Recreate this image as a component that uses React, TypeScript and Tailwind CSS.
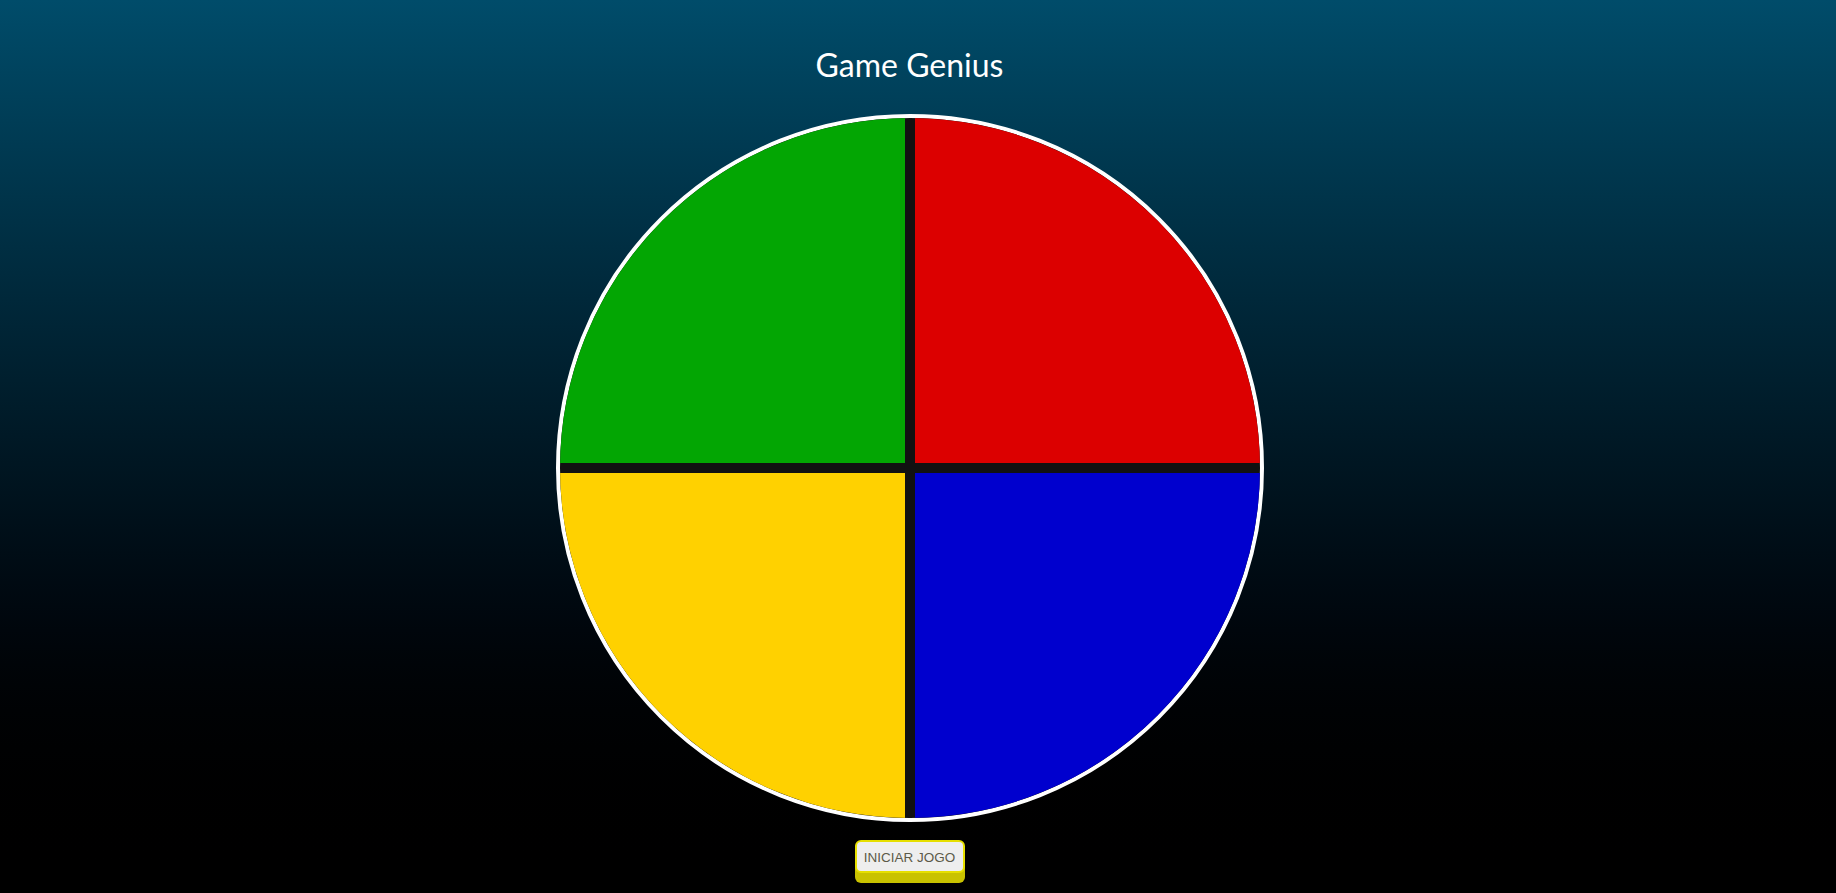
export default function App() {
  const pads = [
    { id: 'green', color: 'bg-[#03a603]' },
    { id: 'red', color: 'bg-[#dc0000]' },
    { id: 'yellow', color: 'bg-[#ffd100]' },
    { id: 'blue', color: 'bg-[#0000ce]' },
  ];

  return (
    <div className="h-[893px] w-full overflow-hidden bg-gradient-to-b from-[#004c6a] to-[#000000] flex flex-col items-center pt-[43px] pr-[17px]">
      {/* Title */}
      <h1 className="text-white text-[32px] leading-[44px] font-['Lato',sans-serif]">Game Genius</h1>

      {/* Board */}
      <div className="mt-[27px] w-[708px] h-[708px] rounded-full border-4 border-white bg-[#111111] overflow-hidden grid grid-cols-2 grid-rows-2 gap-[10px]">
        {pads.map((pad) => (
          <div key={pad.id} className={`${pad.color}`} />
        ))}
      </div>

      {/* Start button */}
      <button className="mt-[18px] w-[110px] h-[33px] pt-[2px] rounded-[6px] border-2 border-[#e6df00] bg-[#eeeeee] shadow-[0_10px_0_#c9c200] text-[#5c5a48] text-[13.5px] leading-none font-['Liberation_Sans',Arial,sans-serif]">
        INICIAR JOGO
      </button>
    </div>
  );
}
